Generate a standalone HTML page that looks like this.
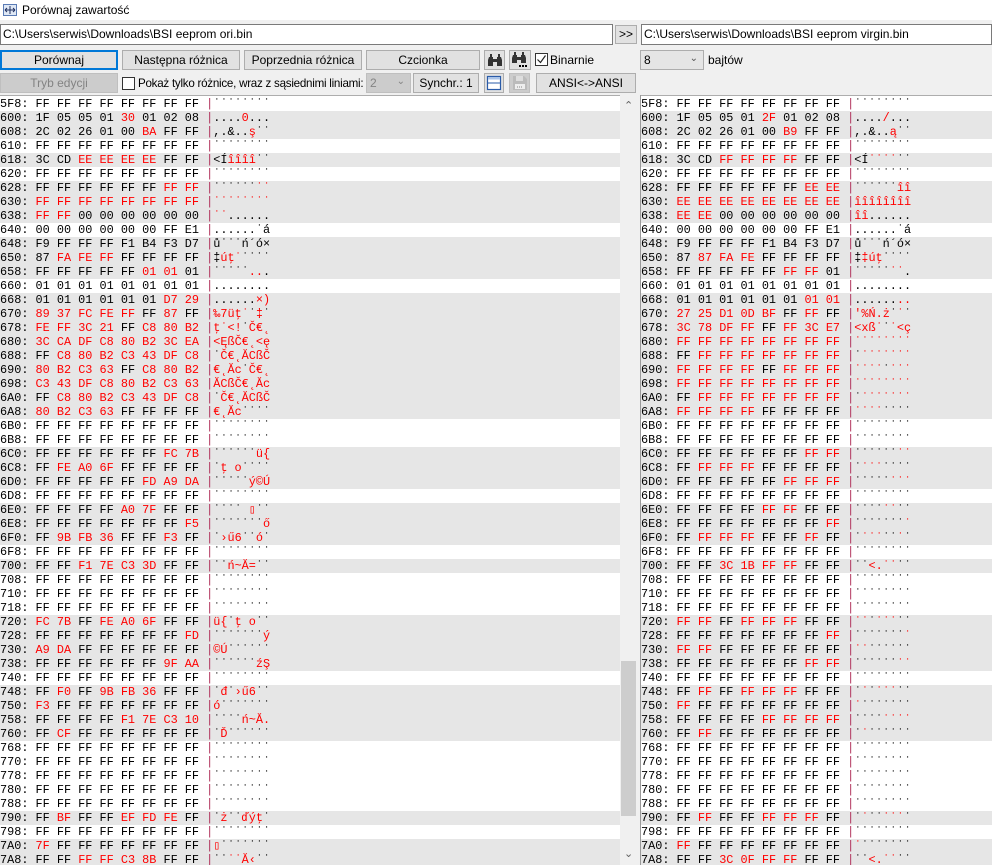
<!DOCTYPE html>
<html><head><meta charset="utf-8">
<style>
*{box-sizing:border-box;margin:0;padding:0}
body{width:992px;height:865px;overflow:hidden;background:#f0f0f0;font-family:"Liberation Sans",sans-serif;font-size:12px;color:#000;position:relative}
.a{position:absolute}
.title{left:0;top:0;width:992px;height:20px;background:#fff}
.inp{background:#fff;border:1px solid #7a7a7a;height:21px;line-height:19px;padding-left:2px;font-size:12px;white-space:nowrap;overflow:hidden}
.btn{background:#e1e1e1;border:1px solid #adadad;height:20px;line-height:18px;text-align:center;font-size:12px}
.dis{color:#838383;background:#cccccc;border-color:#bfbfbf}
.cb{width:13px;height:13px;border:1px solid #333;background:#fff}
.pane{top:95px;height:770px;background:#fff;overflow:hidden;font-family:"Liberation Mono",monospace;font-size:11.85px;color:#000}
.r{height:14px;line-height:14px;white-space:pre;padding-top:0}
.g{background:#e6e6e6}
b{font-weight:normal;color:#f00}
i{font-style:normal;color:#b0305a}
</style></head><body>
<div class="a title">
<svg class="a" style="left:3px;top:4px" width="14" height="12" viewBox="0 0 14 12"><rect x="0.5" y="0.5" width="13" height="11" fill="#dfe8f5" stroke="#5a7bb5"/><path d="M2 6h10M2 6l2-2M2 6l2 2M12 6l-2-2M12 6l-2 2M7 2v8" stroke="#203060" fill="none"/></svg>
<div class="a" style="left:22px;top:3px;font-size:12px">Porównaj zawartość</div>
</div>
<div class="a inp" style="left:0;top:24px;width:613px">C:\Users\serwis\Downloads\BSI eeprom ori.bin</div>
<div class="a btn" style="left:615px;top:25px;width:22px;height:19px;line-height:17px">&gt;&gt;</div>
<div class="a inp" style="left:641px;top:24px;width:351px">C:\Users\serwis\Downloads\BSI eeprom virgin.bin</div>

<div class="a btn" style="left:0;top:50px;width:118px;border:2px solid #0078d7;line-height:16px">Porównaj</div>
<div class="a btn" style="left:122px;top:50px;width:118px">Następna różnica</div>
<div class="a btn" style="left:244px;top:50px;width:118px">Poprzednia różnica</div>
<div class="a btn" style="left:366px;top:50px;width:114px">Czcionka</div>
<div class="a btn" style="left:484px;top:50px;width:21px"><svg width="16" height="14" viewBox="0 0 16 14" style="margin-top:2px"><path d="M2 4h4v9H1V7zM10 4h4l1 3v6h-5zM6 6h4v3H6zM3 1h2v3H3zM11 1h2v3h-2z" fill="#333"/></svg></div>
<div class="a btn" style="left:509px;top:50px;width:22px"><svg width="18" height="16" viewBox="0 0 18 16" style="margin-top:1px"><path d="M2 3h4v8H1V6zM10 3h4l1 3v5h-5zM6 5h4v3H6zM3 0h2v3H3zM11 0h2v3h-2z" fill="#333"/><rect x="8" y="13" width="2" height="2"/><rect x="11" y="13" width="2" height="2"/><rect x="14" y="13" width="2" height="2"/></svg></div>
<div class="a cb" style="left:535px;top:53px"><svg width="11" height="11" viewBox="0 0 11 11"><path d="M1.5 5.5l3 3 5-7" stroke="#222" stroke-width="1.2" fill="none"/></svg></div>
<div class="a" style="left:550px;top:53px">Binarnie</div>
<div class="a inp" style="left:640px;top:50px;width:64px;background:#e5e5e5;border-color:#adadad;height:20px;line-height:18px;padding-left:3px">8<span style="position:absolute;right:5px;top:-1px;color:#555;font-size:10px">&#8964;</span></div>
<div class="a" style="left:708px;top:53px">bajtów</div>

<div class="a btn dis" style="left:0;top:73px;width:118px">Tryb edycji</div>
<div class="a cb" style="left:122px;top:77px"></div>
<div class="a" style="left:138px;top:77px;font-size:11.6px;letter-spacing:-0.25px;white-space:nowrap">Pokaż tylko różnice, wraz z sąsiednimi liniami:</div>
<div class="a inp" style="left:366px;top:73px;width:45px;height:20px;line-height:18px;background:#ccc;border-color:#bfbfbf;color:#838383;padding-left:3px">2<span style="position:absolute;right:5px;top:-1px;font-size:10px">&#8964;</span></div>
<div class="a btn" style="left:413px;top:73px;width:66px">Synchr.: 1</div>
<div class="a btn" style="left:484px;top:73px;width:20px"><svg width="16" height="16" viewBox="0 0 16 16" style="margin-top:1px"><rect x="1.5" y="1.5" width="13" height="13" fill="#fff" stroke="#2a5ba8" stroke-width="1.2"/><rect x="2" y="2" width="12" height="2.5" fill="#a9c3e8"/><path d="M2 8h12" stroke="#2a5ba8"/></svg></div>
<div class="a btn dis" style="left:509px;top:73px;width:21px"><svg width="16" height="16" viewBox="0 0 16 16" style="margin-top:1px"><path d="M1 1h11l3 3v11H1z" fill="#bbb"/><rect x="4" y="1" width="7" height="5" fill="#ddd"/><rect x="3" y="9" width="10" height="5" fill="#eee"/><path d="M5 12h1M7 12h1M9 12h1" stroke="#888"/></svg></div>
<div class="a btn" style="left:536px;top:73px;width:100px">ANSI&lt;-&gt;ANSI</div>

<div class="a pane" style="left:0;width:620px;border-top:1px solid #adadad;padding-top:1px">
<div class="r">5F8: FF FF FF FF FF FF FF FF <i>|</i>˙˙˙˙˙˙˙˙</div>
<div class="r g">600: 1F 05 05 01 <b>30</b> 01 02 08 <i>|</i>....<b>0</b>...</div>
<div class="r g">608: 2C 02 26 01 00 <b>BA</b> FF FF <i>|</i>,.&amp;..<b>ş</b>˙˙</div>
<div class="r">610: FF FF FF FF FF FF FF FF <i>|</i>˙˙˙˙˙˙˙˙</div>
<div class="r g">618: 3C CD <b>EE EE EE EE</b> FF FF <i>|</i>&lt;Í<b>îîîî</b>˙˙</div>
<div class="r">620: FF FF FF FF FF FF FF FF <i>|</i>˙˙˙˙˙˙˙˙</div>
<div class="r g">628: FF FF FF FF FF FF <b>FF FF</b> <i>|</i>˙˙˙˙˙˙<b>˙˙</b></div>
<div class="r g">630: <b>FF FF FF FF FF FF FF FF</b> <i>|</i><b>˙˙˙˙˙˙˙˙</b></div>
<div class="r g">638: <b>FF FF</b> 00 00 00 00 00 00 <i>|</i><b>˙˙</b>......</div>
<div class="r">640: 00 00 00 00 00 00 FF E1 <i>|</i>......˙á</div>
<div class="r g">648: F9 FF FF FF F1 B4 F3 D7 <i>|</i>ů˙˙˙ń´ó×</div>
<div class="r g">650: 87 <b>FA FE FF</b> FF FF FF FF <i>|</i>‡<b>úţ˙</b>˙˙˙˙</div>
<div class="r g">658: FF FF FF FF FF <b>01 01</b> 01 <i>|</i>˙˙˙˙˙<b>..</b>.</div>
<div class="r">660: 01 01 01 01 01 01 01 01 <i>|</i>........</div>
<div class="r g">668: 01 01 01 01 01 01 <b>D7 29</b> <i>|</i>......<b>×)</b></div>
<div class="r g">670: <b>89 37 FC FE FF</b> FF <b>87</b> FF <i>|</i><b>‰7üţ˙</b>˙<b>‡</b>˙</div>
<div class="r g">678: <b>FE FF 3C 21</b> FF <b>C8 80 B2</b> <i>|</i><b>ţ˙&lt;!</b>˙<b>Č€˛</b></div>
<div class="r g">680: <b>3C CA DF C8 80 B2 3C EA</b> <i>|</i><b>&lt;ĘßČ€˛&lt;ę</b></div>
<div class="r g">688: FF <b>C8 80 B2 C3 43 DF C8</b> <i>|</i>˙<b>Č€˛ĂCßČ</b></div>
<div class="r g">690: <b>80 B2 C3 63</b> FF <b>C8 80 B2</b> <i>|</i><b>€˛Ăc</b>˙<b>Č€˛</b></div>
<div class="r g">698: <b>C3 43 DF C8 80 B2 C3 63</b> <i>|</i><b>ĂCßČ€˛Ăc</b></div>
<div class="r g">6A0: FF <b>C8 80 B2 C3 43 DF C8</b> <i>|</i>˙<b>Č€˛ĂCßČ</b></div>
<div class="r g">6A8: <b>80 B2 C3 63</b> FF FF FF FF <i>|</i><b>€˛Ăc</b>˙˙˙˙</div>
<div class="r">6B0: FF FF FF FF FF FF FF FF <i>|</i>˙˙˙˙˙˙˙˙</div>
<div class="r">6B8: FF FF FF FF FF FF FF FF <i>|</i>˙˙˙˙˙˙˙˙</div>
<div class="r g">6C0: FF FF FF FF FF FF <b>FC 7B</b> <i>|</i>˙˙˙˙˙˙<b>ü{</b></div>
<div class="r g">6C8: FF <b>FE A0 6F</b> FF FF FF FF <i>|</i>˙<b>ţ o</b>˙˙˙˙</div>
<div class="r g">6D0: FF FF FF FF FF <b>FD A9 DA</b> <i>|</i>˙˙˙˙˙<b>ý©Ú</b></div>
<div class="r">6D8: FF FF FF FF FF FF FF FF <i>|</i>˙˙˙˙˙˙˙˙</div>
<div class="r g">6E0: FF FF FF FF <b>A0 7F</b> FF FF <i>|</i>˙˙˙˙<b> ▯</b>˙˙</div>
<div class="r g">6E8: FF FF FF FF FF FF FF <b>F5</b> <i>|</i>˙˙˙˙˙˙˙<b>ő</b></div>
<div class="r g">6F0: FF <b>9B FB 36</b> FF FF <b>F3</b> FF <i>|</i>˙<b>›ű6</b>˙˙<b>ó</b>˙</div>
<div class="r">6F8: FF FF FF FF FF FF FF FF <i>|</i>˙˙˙˙˙˙˙˙</div>
<div class="r g">700: FF FF <b>F1 7E C3 3D</b> FF FF <i>|</i>˙˙<b>ń~Ă=</b>˙˙</div>
<div class="r">708: FF FF FF FF FF FF FF FF <i>|</i>˙˙˙˙˙˙˙˙</div>
<div class="r">710: FF FF FF FF FF FF FF FF <i>|</i>˙˙˙˙˙˙˙˙</div>
<div class="r">718: FF FF FF FF FF FF FF FF <i>|</i>˙˙˙˙˙˙˙˙</div>
<div class="r g">720: <b>FC 7B</b> FF <b>FE A0 6F</b> FF FF <i>|</i><b>ü{</b>˙<b>ţ o</b>˙˙</div>
<div class="r g">728: FF FF FF FF FF FF FF <b>FD</b> <i>|</i>˙˙˙˙˙˙˙<b>ý</b></div>
<div class="r g">730: <b>A9 DA</b> FF FF FF FF FF FF <i>|</i><b>©Ú</b>˙˙˙˙˙˙</div>
<div class="r g">738: FF FF FF FF FF FF <b>9F AA</b> <i>|</i>˙˙˙˙˙˙<b>źŞ</b></div>
<div class="r">740: FF FF FF FF FF FF FF FF <i>|</i>˙˙˙˙˙˙˙˙</div>
<div class="r g">748: FF <b>F0</b> FF <b>9B FB 36</b> FF FF <i>|</i>˙<b>đ</b>˙<b>›ű6</b>˙˙</div>
<div class="r g">750: <b>F3</b> FF FF FF FF FF FF FF <i>|</i><b>ó</b>˙˙˙˙˙˙˙</div>
<div class="r g">758: FF FF FF FF <b>F1 7E C3 10</b> <i>|</i>˙˙˙˙<b>ń~Ă.</b></div>
<div class="r g">760: FF <b>CF</b> FF FF FF FF FF FF <i>|</i>˙<b>Ď</b>˙˙˙˙˙˙</div>
<div class="r">768: FF FF FF FF FF FF FF FF <i>|</i>˙˙˙˙˙˙˙˙</div>
<div class="r">770: FF FF FF FF FF FF FF FF <i>|</i>˙˙˙˙˙˙˙˙</div>
<div class="r">778: FF FF FF FF FF FF FF FF <i>|</i>˙˙˙˙˙˙˙˙</div>
<div class="r">780: FF FF FF FF FF FF FF FF <i>|</i>˙˙˙˙˙˙˙˙</div>
<div class="r">788: FF FF FF FF FF FF FF FF <i>|</i>˙˙˙˙˙˙˙˙</div>
<div class="r g">790: FF <b>BF</b> FF FF <b>EF FD FE</b> FF <i>|</i>˙<b>ż</b>˙˙<b>ďýţ</b>˙</div>
<div class="r">798: FF FF FF FF FF FF FF FF <i>|</i>˙˙˙˙˙˙˙˙</div>
<div class="r g">7A0: <b>7F</b> FF FF FF FF FF FF FF <i>|</i><b>▯</b>˙˙˙˙˙˙˙</div>
<div class="r g">7A8: FF FF <b>FF FF C3 8B</b> FF FF <i>|</i>˙˙<b>˙˙Ă‹</b>˙˙</div>
</div>

<div class="a" style="left:620px;top:95px;width:17px;height:770px;background:#f0f0f0">
<div class="a" style="left:4px;top:4px;color:#606060;font-size:11px">&#8963;</div>
<div class="a" style="left:1px;top:566px;width:15px;height:155px;background:#cdcdcd"></div>
<div class="a" style="left:4px;top:752px;color:#606060;font-size:11px">&#8964;</div>
</div>
<div class="a" style="left:638px;top:95px;width:3px;height:770px;background:#f0f0f0;border-right:1px solid #9a9a9a"></div>

<div class="a pane" style="left:641px;width:351px;border-top:1px solid #adadad;padding-top:1px">
<div class="r">5F8: FF FF FF FF FF FF FF FF <i>|</i>˙˙˙˙˙˙˙˙</div>
<div class="r g">600: 1F 05 05 01 <b>2F</b> 01 02 08 <i>|</i>....<b>/</b>...</div>
<div class="r g">608: 2C 02 26 01 00 <b>B9</b> FF FF <i>|</i>,.&amp;..<b>ą</b>˙˙</div>
<div class="r">610: FF FF FF FF FF FF FF FF <i>|</i>˙˙˙˙˙˙˙˙</div>
<div class="r g">618: 3C CD <b>FF FF FF FF</b> FF FF <i>|</i>&lt;Í<b>˙˙˙˙</b>˙˙</div>
<div class="r">620: FF FF FF FF FF FF FF FF <i>|</i>˙˙˙˙˙˙˙˙</div>
<div class="r g">628: FF FF FF FF FF FF <b>EE EE</b> <i>|</i>˙˙˙˙˙˙<b>îî</b></div>
<div class="r g">630: <b>EE EE EE EE EE EE EE EE</b> <i>|</i><b>îîîîîîîî</b></div>
<div class="r g">638: <b>EE EE</b> 00 00 00 00 00 00 <i>|</i><b>îî</b>......</div>
<div class="r">640: 00 00 00 00 00 00 FF E1 <i>|</i>......˙á</div>
<div class="r g">648: F9 FF FF FF F1 B4 F3 D7 <i>|</i>ů˙˙˙ń´ó×</div>
<div class="r g">650: 87 <b>87 FA FE</b> FF FF FF FF <i>|</i>‡<b>‡úţ</b>˙˙˙˙</div>
<div class="r g">658: FF FF FF FF FF <b>FF FF</b> 01 <i>|</i>˙˙˙˙˙<b>˙˙</b>.</div>
<div class="r">660: 01 01 01 01 01 01 01 01 <i>|</i>........</div>
<div class="r g">668: 01 01 01 01 01 01 <b>01 01</b> <i>|</i>......<b>..</b></div>
<div class="r g">670: <b>27 25 D1 0D BF</b> FF <b>FF</b> FF <i>|</i><b>'%Ń.ż</b>˙<b>˙</b>˙</div>
<div class="r g">678: <b>3C 78 DF FF</b> FF <b>FF 3C E7</b> <i>|</i><b>&lt;xß˙</b>˙<b>˙&lt;ç</b></div>
<div class="r g">680: <b>FF FF FF FF FF FF FF FF</b> <i>|</i><b>˙˙˙˙˙˙˙˙</b></div>
<div class="r g">688: FF <b>FF FF FF FF FF FF FF</b> <i>|</i>˙<b>˙˙˙˙˙˙˙</b></div>
<div class="r g">690: <b>FF FF FF FF</b> FF <b>FF FF FF</b> <i>|</i><b>˙˙˙˙</b>˙<b>˙˙˙</b></div>
<div class="r g">698: <b>FF FF FF FF FF FF FF FF</b> <i>|</i><b>˙˙˙˙˙˙˙˙</b></div>
<div class="r g">6A0: FF <b>FF FF FF FF FF FF FF</b> <i>|</i>˙<b>˙˙˙˙˙˙˙</b></div>
<div class="r g">6A8: <b>FF FF FF FF</b> FF FF FF FF <i>|</i><b>˙˙˙˙</b>˙˙˙˙</div>
<div class="r">6B0: FF FF FF FF FF FF FF FF <i>|</i>˙˙˙˙˙˙˙˙</div>
<div class="r">6B8: FF FF FF FF FF FF FF FF <i>|</i>˙˙˙˙˙˙˙˙</div>
<div class="r g">6C0: FF FF FF FF FF FF <b>FF FF</b> <i>|</i>˙˙˙˙˙˙<b>˙˙</b></div>
<div class="r g">6C8: FF <b>FF FF FF</b> FF FF FF FF <i>|</i>˙<b>˙˙˙</b>˙˙˙˙</div>
<div class="r g">6D0: FF FF FF FF FF <b>FF FF FF</b> <i>|</i>˙˙˙˙˙<b>˙˙˙</b></div>
<div class="r">6D8: FF FF FF FF FF FF FF FF <i>|</i>˙˙˙˙˙˙˙˙</div>
<div class="r g">6E0: FF FF FF FF <b>FF FF</b> FF FF <i>|</i>˙˙˙˙<b>˙˙</b>˙˙</div>
<div class="r g">6E8: FF FF FF FF FF FF FF <b>FF</b> <i>|</i>˙˙˙˙˙˙˙<b>˙</b></div>
<div class="r g">6F0: FF <b>FF FF FF</b> FF FF <b>FF</b> FF <i>|</i>˙<b>˙˙˙</b>˙˙<b>˙</b>˙</div>
<div class="r">6F8: FF FF FF FF FF FF FF FF <i>|</i>˙˙˙˙˙˙˙˙</div>
<div class="r g">700: FF FF <b>3C 1B FF FF</b> FF FF <i>|</i>˙˙<b>&lt;.˙˙</b>˙˙</div>
<div class="r">708: FF FF FF FF FF FF FF FF <i>|</i>˙˙˙˙˙˙˙˙</div>
<div class="r">710: FF FF FF FF FF FF FF FF <i>|</i>˙˙˙˙˙˙˙˙</div>
<div class="r">718: FF FF FF FF FF FF FF FF <i>|</i>˙˙˙˙˙˙˙˙</div>
<div class="r g">720: <b>FF FF</b> FF <b>FF FF FF</b> FF FF <i>|</i><b>˙˙</b>˙<b>˙˙˙</b>˙˙</div>
<div class="r g">728: FF FF FF FF FF FF FF <b>FF</b> <i>|</i>˙˙˙˙˙˙˙<b>˙</b></div>
<div class="r g">730: <b>FF FF</b> FF FF FF FF FF FF <i>|</i><b>˙˙</b>˙˙˙˙˙˙</div>
<div class="r g">738: FF FF FF FF FF FF <b>FF FF</b> <i>|</i>˙˙˙˙˙˙<b>˙˙</b></div>
<div class="r">740: FF FF FF FF FF FF FF FF <i>|</i>˙˙˙˙˙˙˙˙</div>
<div class="r g">748: FF <b>FF</b> FF <b>FF FF FF</b> FF FF <i>|</i>˙<b>˙</b>˙<b>˙˙˙</b>˙˙</div>
<div class="r g">750: <b>FF</b> FF FF FF FF FF FF FF <i>|</i><b>˙</b>˙˙˙˙˙˙˙</div>
<div class="r g">758: FF FF FF FF <b>FF FF FF FF</b> <i>|</i>˙˙˙˙<b>˙˙˙˙</b></div>
<div class="r g">760: FF <b>FF</b> FF FF FF FF FF FF <i>|</i>˙<b>˙</b>˙˙˙˙˙˙</div>
<div class="r">768: FF FF FF FF FF FF FF FF <i>|</i>˙˙˙˙˙˙˙˙</div>
<div class="r">770: FF FF FF FF FF FF FF FF <i>|</i>˙˙˙˙˙˙˙˙</div>
<div class="r">778: FF FF FF FF FF FF FF FF <i>|</i>˙˙˙˙˙˙˙˙</div>
<div class="r">780: FF FF FF FF FF FF FF FF <i>|</i>˙˙˙˙˙˙˙˙</div>
<div class="r">788: FF FF FF FF FF FF FF FF <i>|</i>˙˙˙˙˙˙˙˙</div>
<div class="r g">790: FF <b>FF</b> FF FF <b>FF FF FF</b> FF <i>|</i>˙<b>˙</b>˙˙<b>˙˙˙</b>˙</div>
<div class="r">798: FF FF FF FF FF FF FF FF <i>|</i>˙˙˙˙˙˙˙˙</div>
<div class="r g">7A0: <b>FF</b> FF FF FF FF FF FF FF <i>|</i><b>˙</b>˙˙˙˙˙˙˙</div>
<div class="r g">7A8: FF FF <b>3C 0F FF FF</b> FF FF <i>|</i>˙˙<b>&lt;.˙˙</b>˙˙</div>
</div>
</body></html>
